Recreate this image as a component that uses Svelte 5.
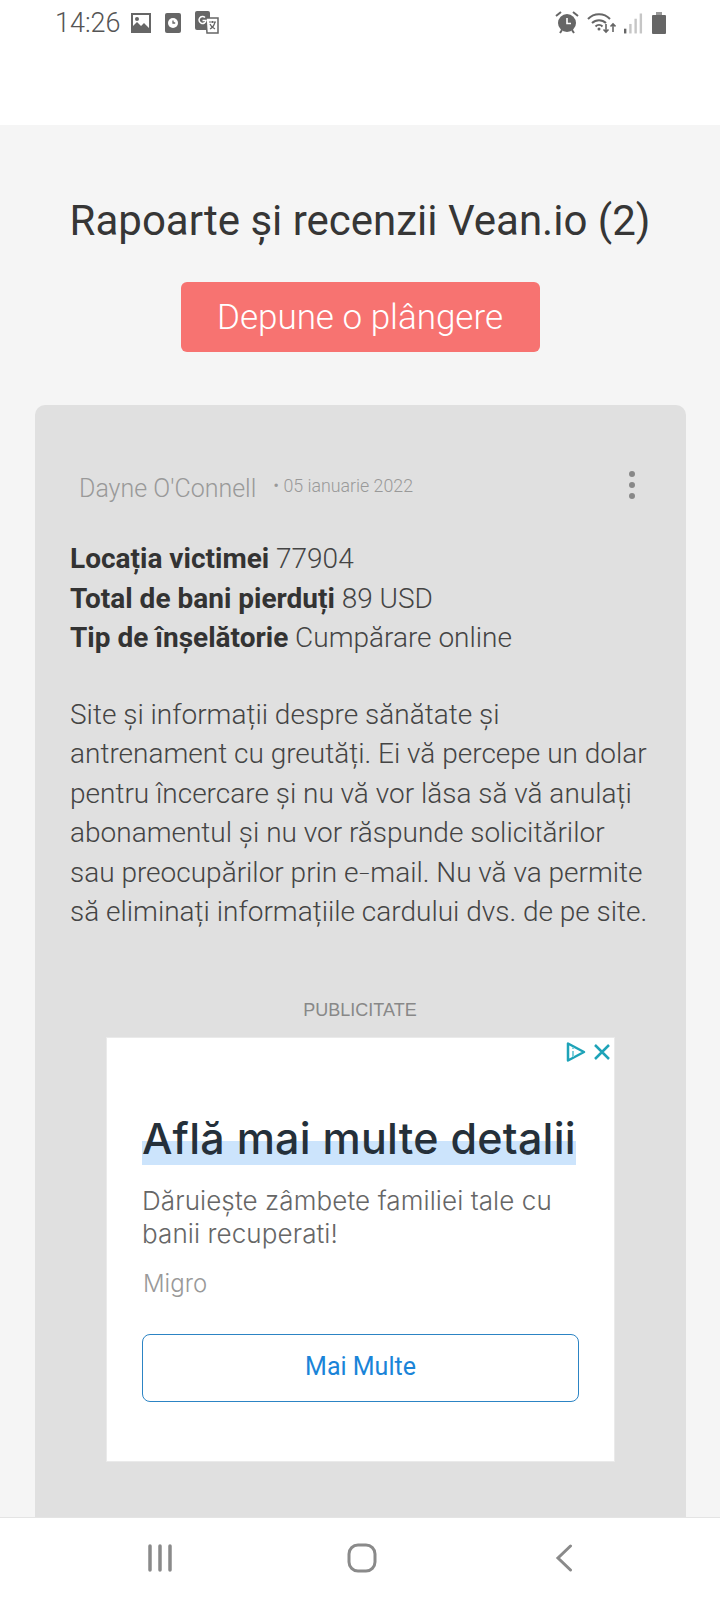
<script>
	const facts = [
		['Locația victimei', '77904'],
		['Total de bani pierduți', '89 USD'],
		['Tip de înșelătorie', 'Cumpărare online']
	];
</script>

<div class="phone">
	<header class="status">
		<div class="status-left">
			<span class="time">14:26</span>
			<svg width="22" height="22" viewBox="0 0 22 22">
				<path fill="#666" fill-rule="evenodd" d="M1 1h20v20H1zM3 3v11l4-4 4 4 3-3 5 5V3z" />
				<circle cx="7" cy="7" r="2" fill="#666" />
			</svg>
			<svg width="18" height="22" viewBox="0 0 18 22">
				<rect x="1" y="1" width="16" height="20" rx="2" fill="#666" />
				<circle cx="9" cy="11" r="5" fill="#fff" />
				<path d="M9 8.500V11h2.200" fill="none" stroke="#666" stroke-width="1.300" />
			</svg>
			<svg width="26" height="26" viewBox="0 0 26 26">
				<rect x="1" y="1" width="15" height="19" rx="2" fill="#666" />
				<path d="M12 8h12v15H13z" fill="#fff" stroke="#666" stroke-width="1.500" />
				<path d="M11 7.500a3.500 3.500 0 1 0 1 3H8.500" fill="none" stroke="#fff" stroke-width="1.500" />
				<path d="M15 12h7M18.500 11v2M21 12c-1 4-3 6-5 7M16 14c1 3 3 4 5 5" fill="none" stroke="#666" stroke-width="1.200" />
			</svg>
		</div>
		<div class="status-right">
			<svg width="24" height="24" viewBox="1 1 24 24">
				<circle cx="13" cy="13" r="9" fill="#666" />
				<path d="M13 8v5.500h4" fill="none" stroke="#fff" stroke-width="1.600" />
				<path d="M2 6l5-4M24 6l-5-4M6 23l2-3M20 23l-2-3" stroke="#666" stroke-width="2" />
			</svg>
			<svg width="29" height="24" viewBox="0 0 29 24">
				<path d="M1 8a15 15 0 0 1 22 0M5 12a10 10 0 0 1 14 0M8.500 15.500a5 5 0 0 1 7 0" fill="none" stroke="#666" stroke-width="2" />
				<circle cx="12" cy="18" r="1.500" fill="#666" />
				<path d="M19 13v8m-2.500-2.500L19 21l2.500-2.500M26 21v-8m-2.500 2.500L26 13l2.500 2.500" fill="none" stroke="#666" stroke-width="1.600" />
			</svg>
			<svg width="19" height="22" viewBox="0 0 20 22">
				<rect x="0" y="17" width="2.500" height="5" fill="#666" />
				<rect x="5.500" y="12" width="2.500" height="10" fill="#c6c6c6" />
				<rect x="11" y="6.500" width="2.500" height="15.500" fill="#c6c6c6" />
				<rect x="16.500" y="1" width="2.500" height="21" fill="#c6c6c6" />
			</svg>
			<svg width="16" height="22" viewBox="0 0 16 22">
				<rect x="5" y="0" width="6" height="3" fill="#999" />
				<rect x="1" y="3" width="14" height="19" rx="1" fill="#666" />
			</svg>
		</div>
	</header>

	<main class="page">
		<h1>Rapoarte și recenzii Vean.io (2)</h1>
		<button class="complain">Depune o plângere</button>

		<article class="card">
			<div class="meta">
				<span class="author">Dayne O'Connell</span>
				<span class="date">• 05 ianuarie 2022</span>
				<span class="dots"><i></i><i></i><i></i></span>
			</div>

			<div class="facts">
				{#each facts as [label, value]}
					<p><b>{label}</b> {value}</p>
				{/each}
			</div>

			<p class="story">
				Site și informații despre sănătate și<br />
				antrenament cu greutăți. Ei vă percepe un dolar<br />
				pentru încercare și nu vă vor lăsa să vă anulați<br />
				abonamentul și nu vor răspunde solicitărilor<br />
				sau preocupărilor prin e<span class="dash">–</span>mail. Nu vă va permite<br />
				să eliminați informațiile cardului dvs. de pe site.
			</p>

			<div class="ad-label">PUBLICITATE</div>
			<aside class="ad">
				<div class="ad-icons">
					<svg width="22" height="22" viewBox="0 0 22 22">
						<path d="M3 2.500v17L19 11z" fill="none" stroke="#1ea3b8" stroke-width="2.500" stroke-linejoin="round" />
						<path d="M8 10v6M8 6.500v1.500" fill="none" stroke="#7fd0dc" stroke-width="2" />
					</svg>
					<svg width="18" height="18" viewBox="0 0 18 18">
						<path d="M2 2l14 14M16 2L2 16" stroke="#1ea3b8" stroke-width="2.500" />
					</svg>
				</div>
				<h2><span>Află mai multe detalii</span></h2>
				<p class="ad-text">Dăruiește zâmbete familiei tale cu banii recuperati!</p>
				<p class="ad-brand">Migro</p>
				<div class="ad-btn">Mai Multe</div>
			</aside>
		</article>
	</main>

	<nav class="navbar">
		<svg width="26" height="28" viewBox="0 0 26 28">
			<path d="M3 2v24M13 2v24M23 2v24" stroke="#8a8a8a" stroke-width="3.500" stroke-linecap="round" />
		</svg>
		<svg width="30" height="30" viewBox="0 0 30 30">
			<rect x="2" y="2" width="26" height="26" rx="9" fill="none" stroke="#8a8a8a" stroke-width="3" />
		</svg>
		<svg width="18" height="28" viewBox="0 0 18 28">
			<path d="M15.500 2L3 14l12.500 12" fill="none" stroke="#8a8a8a" stroke-width="3" stroke-linecap="round" />
		</svg>
	</nav>
</div>

<style>
	:global(body) {
		margin: 0;
		background: #f5f5f5;
	}

	.phone {
		position: relative;
		width: 720px;
		height: 1600px;
		overflow: hidden;
		display: flex;
		flex-direction: column;
		font-family: Roboto, sans-serif;
	}

	.status {
		height: 125px;
		flex: none;
		background: #fff;
		display: flex;
		justify-content: space-between;
		align-items: flex-start;
		padding: 10px 53px 0 55px;
		box-sizing: border-box;
	}

	.status-left,
	.status-right {
		display: flex;
		align-items: center;
		height: 26px;
		gap: 12px;
	}

	.status-right {
		gap: 8px;
	}

	.time {
		font-size: 27px;
		font-weight: 300;
		color: #555;
		margin-right: -3px;
	}

	.page {
		flex: 1;
		display: flex;
		flex-direction: column;
		align-items: center;
		background: #f5f5f5;
		padding-top: 71px;
		min-height: 0;
	}

	h1 {
		margin: 0;
		font-size: 42px;
		line-height: 50px;
		font-weight: 400;
		color: #363636;
		white-space: nowrap;
	}

	.complain {
		width: 359px;
		height: 70px;
		margin-top: 36px;
		border: 0;
		border-radius: 6px;
		background: #f77371;
		color: #fff;
		font-family: inherit;
		font-size: 35px;
		font-weight: 300;
	}

	.card {
		align-self: flex-start;
		width: 651px;
		margin: 53px 0 0 35px;
		flex: 1;
		box-sizing: border-box;
		padding: 60px 36px 0 35px;
		background: #e0e0e0;
		border-radius: 10px 10px 0 0;
		color: #444;
	}

	.meta {
		display: flex;
		align-items: center;
		height: 40px;
		padding-left: 9px;
		color: #999;
	}

	.author {
		font-size: 25px;
		font-weight: 300;
		margin-top: 6px;
	}

	.date {
		font-size: 17.800px;
		font-weight: 300;
		margin-left: 17px;
	}

	.dots {
		margin-left: auto;
		margin-right: 15px;
		display: flex;
		flex-direction: column;
		gap: 5px;
	}

	.dots i {
		width: 6px;
		height: 6px;
		border-radius: 50%;
		background: #888;
	}

	.facts {
		margin-top: 34px;
	}

	.facts p,
	.story {
		margin: 0;
		font-size: 28px;
		line-height: 39.500px;
		font-weight: 300;
		color: #444;
	}

	.facts b {
		font-weight: 700;
		color: #333;
	}

	.story {
		margin-top: 37px;
		white-space: nowrap;
	}

	.dash {
		font-size: 18px;
		line-height: 1;
		vertical-align: 2px;
	}

	.ad-label {
		margin-top: 68px;
		text-align: center;
		font-family: "Liberation Sans", sans-serif;
		font-size: 18px;
		color: #888;
	}

	.ad {
		position: relative;
		width: 509px;
		height: 425px;
		margin: 16px 0 0 36px;
		box-sizing: border-box;
		padding: 73px 35px 0 36px;
		background: #fff;
		border: 1px solid #eaeaea;
	}

	.ad-icons {
		position: absolute;
		top: 3px;
		right: 3px;
		display: flex;
		align-items: center;
		gap: 6px;
	}

	h2 {
		margin: 0;
		font-family: Inter, sans-serif;
		font-size: 43px;
		line-height: 54px;
		font-weight: 500;
		letter-spacing: 0.250px;
		color: #25303a;
		white-space: nowrap;
	}

	h2 span {
		display: block;
		margin: 0 3px 0 -1px;
		background: linear-gradient(transparent 55.500%, #cce4fc 55.500%);
	}

	.ad-text {
		margin: 19px 0 0 -1px;
		font-family: Inter, sans-serif;
		font-size: 26px;
		line-height: 33px;
		font-weight: 300;
		letter-spacing: 0.100px;
		color: #666;
	}

	.ad-brand {
		margin: 19px 0 0;
		font-family: Inter, sans-serif;
		font-size: 24px;
		line-height: 30px;
		font-weight: 300;
		color: #999;
	}

	.ad-btn {
		height: 68px;
		margin-top: 35px;
		margin-left: -1px;
		display: flex;
		align-items: center;
		justify-content: center;
		box-sizing: border-box;
		padding-bottom: 2px;
		border: 1.500px solid #2c84c4;
		border-radius: 8px;
		font-size: 25px;
		color: #1a84d8;
	}

	.navbar {
		position: absolute;
		left: 0;
		right: 0;
		bottom: 0;
		height: 83px;
		background: #fff;
		border-top: 1px solid #e4e4e4;
		box-sizing: border-box;
		display: grid;
		grid-template-columns: repeat(3, 202px);
		justify-content: center;
		justify-items: center;
		align-items: center;
		padding: 0 0 2px 3px;
	}
</style>
